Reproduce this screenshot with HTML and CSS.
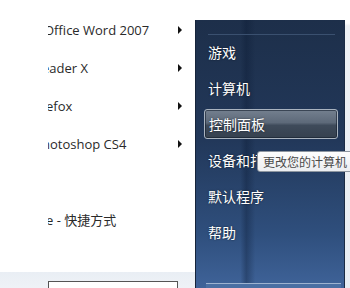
FILE: index.html
```html
<!DOCTYPE html>
<html lang="zh-CN">
<head>
    <meta charset="UTF-8">
    <title>开始菜单</title>
    <link rel="stylesheet" href="styles.css">
</head>
<body>
    <div class="start-menu">
        <div class="programs">
            <ul class="program-list">
                <li class="program"><span class="name"><span class="cut c4">Office Word 2007</span></span><span class="arrow"></span></li>
                <li class="program"><span class="name"><span class="cut c6">eader X</span></span><span class="arrow"></span></li>
                <li class="program"><span class="name"><span class="cut c2">efox</span></span><span class="arrow"></span></li>
                <li class="program"><span class="name"><span class="cut c6">hotoshop CS4</span></span><span class="arrow"></span></li>
                <li class="program"></li>
                <li class="program"><span class="name"><span class="cut c2">e - 快捷方式</span></span></li>
            </ul>
            <div class="divider"></div>
            <div class="search-area">
                <div class="search-box"></div>
            </div>
        </div>

        <div class="places">
            <div class="places-line"></div>
            <ul class="place-list">
                <li class="place">游戏</li>
                <li class="place">计算机</li>
                <li class="place active">控制面板</li>
                <li class="place">设备和打</li>
                <li class="place">默认程序</li>
                <li class="place">帮助</li>
            </ul>
            <div class="shutdown"></div>
            <div class="tooltip">更改您的计算机</div>
        </div>
        <div class="edge"></div>
    </div>
</body>
</html>
```

FILE: styles.css
```css
* {
    margin: 0;
    padding: 0;
    box-sizing: border-box;
}

body {
    background: #fff;
    font-family: "Open Sans", "Noto Sans CJK SC", sans-serif;
    width: 350px;
    height: 288px;
    overflow: hidden;
}

ul {
    list-style: none;
}

.start-menu {
    display: flex;
    height: 288px;
}

/* left white column */
.programs {
    width: 195px;
    display: flex;
    flex-direction: column;
    padding-top: 11px;
}

.program {
    height: 38px;
    display: flex;
    align-items: center;
    padding-left: 48px;
    padding-right: 13px;
    font-size: 13px;
    color: #2a2a2a;
}

.name {
    flex: 1;
    overflow: hidden;
    white-space: nowrap;
    line-height: 20px;
}

.cut {
    display: inline-block;
}

.c2 { margin-left: -2px; }
.c4 { margin-left: -4px; }
.c6 { margin-left: -6px; }

.arrow {
    width: 0;
    height: 0;
    border-top: 4px solid transparent;
    border-bottom: 4px solid transparent;
    border-left: 4px solid #111;
}

.divider {
    height: 1px;
    background: #dfe3e8;
    margin: 5px 7px 0 48px;
}

.search-area {
    margin-top: 28px;
    flex: 1;
    background: linear-gradient(180deg, #e9eef4 0%, #f4f6f9 100%);
    padding: 9px 17px 0 48px;
}

.search-box {
    height: 20px;
    background: #fff;
    border: 1px solid #555;
    border-bottom: none;
}

/* right dark blue column */
.places {
    position: relative;
    width: 150px;
    margin-top: 20px;
    background:
        linear-gradient(90deg, rgba(0, 0, 0, 0) 0%, rgba(0, 0, 0, 0) 30%, rgba(10, 25, 50, 0.35) 34%, rgba(0, 0, 0, 0) 40%, rgba(0, 0, 0, 0) 100%),
        linear-gradient(180deg, #1d2f4a 0%, #22385a 45%, #2f4f7d 80%, #3f6399 100%);
    border-left: 1px solid #16243a;
    border-right: 1px solid #1b2b44;
    display: flex;
    flex-direction: column;
}

.places-line {
    height: 1px;
    margin: 14px 9px 0 12px;
    background: #3a506f;
}

.place-list {
    margin-top: -1px;
}

.place {
    height: 36px;
    display: flex;
    align-items: center;
    margin: 0 6px 0 8px;
    padding-left: 4px;
    color: #fff;
    font-size: 14px;
    font-family: "Noto Sans CJK SC", sans-serif;
    text-shadow: 0 0 2px rgba(0, 0, 0, 0.6);
}

.place.active {
    height: 30px;
    margin-top: 3px;
    margin-bottom: 3px;
    border: 1px solid #a9b3bf;
    border-radius: 3px;
    background: linear-gradient(180deg, #74808f 0%, #5d6979 45%, #3e4a5a 55%, #36414f 100%);
    box-shadow: inset 0 0 0 1px rgba(20, 30, 45, 0.6);
}

.shutdown {
    margin: auto 3px 0 10px;
    height: 5px;
    border-top: 1px solid #9db3d0;
    background: #4a6fa3;
}

.tooltip {
    position: absolute;
    left: 61px;
    top: 131px;
    width: 100px;
    height: 21px;
    padding-left: 5px;
    background: linear-gradient(180deg, #fdfdfd 0%, #eceef1 100%);
    border: 1px solid #8e96a0;
    border-radius: 3px;
    color: #4a4a4a;
    font-size: 12px;
    line-height: 19px;
    font-family: "Noto Sans CJK SC", sans-serif;
    white-space: nowrap;
}

.edge {
    flex: 1;
    background: linear-gradient(180deg, #fff 0%, #fff 8%, #eef1f5 9%, #e8edf3 100%);
}
```
